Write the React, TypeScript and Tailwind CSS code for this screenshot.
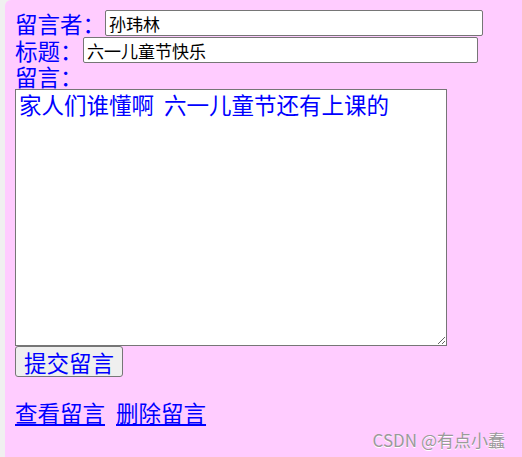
const cjk = "font-['Noto_Sans_CJK_SC',sans-serif]";

export default function App() {
  return (
    <div className={`min-h-[457px] flex bg-[#f0f0f0] ${cjk}`}>
      <div className="w-[5px] shrink-0" />
      <div className="relative flex-1 bg-[#ffccff] rounded-tl-[6px] pl-[10px] pt-[10px] text-[#0000ff] text-[22.5px]">
        <div className="flex items-center h-[26px]">
          <span className="w-[90px] shrink-0 leading-[22px]">留言者：</span>
          <input
            defaultValue="孙玮林"
            className="w-[378px] h-[26px] bg-white border border-[#767676] rounded-[2px] px-[3px] text-[17px] text-black outline-none"
          />
        </div>
        <div className="flex items-center h-[26px] mt-[1px]">
          <span className="w-[68px] shrink-0 leading-[22px]">标题：</span>
          <input
            defaultValue="六一儿童节快乐"
            className="w-[395px] h-[26px] bg-white border border-[#767676] rounded-[2px] px-[3px] text-[17px] text-black outline-none"
          />
        </div>
        <div className="flex items-center h-[26px]">
          <span className="leading-[22px]">留言：</span>
        </div>
        <textarea
          defaultValue="家人们谁懂啊  六一儿童节还有上课的"
          className="block w-[432px] h-[257px] bg-white border border-[#767676] px-[3px] py-[1px] text-[22.5px] leading-[26px] text-[#0000ff] outline-none"
        />
        <button className="block h-[31px] px-[8px] bg-[#efefef] border border-[#767676] rounded-[3px] text-[22.5px] leading-[26px] text-[#0000ff]">
          提交留言
        </button>
        <div className="mt-[22px] flex gap-[11px] h-[26px] leading-[26px]">
          <a href="#" className="underline text-[#0000ff]">查看留言</a>
          <a href="#" className="underline text-[#0000ff]">删除留言</a>
        </div>
        <div className="absolute right-[17px] bottom-[7px] text-[17px] leading-[20px] text-[#9a9a9a] [text-shadow:0_1px_0_#ffffff]">
          CSDN @有点小蠢
        </div>
      </div>
    </div>
  );
}
